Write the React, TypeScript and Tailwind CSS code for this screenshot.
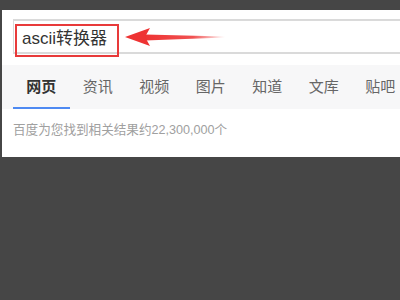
import React from "react";

const tabs = ["网页", "资讯", "视频", "图片", "知道", "文库", "贴吧"];

export default function App() {
  return (
    <div className="w-[400px] h-[300px] bg-[#464646] overflow-hidden flex flex-col font-['Noto_Sans_CJK_SC',sans-serif]">
      <div className="h-[10px] shrink-0" />
      <div className="relative ml-[2px] h-[147px] bg-white flex flex-col">
        {/* Search box */}
        <div className="relative mt-[9px] ml-[11px] h-[35px] border-t-2 border-b-2 border-l border-[#dadada] flex items-center">
          <span className="ml-[8px] mt-[3px] text-[17px] text-[#333] leading-none font-['Liberation_Sans','Noto_Sans_CJK_SC',sans-serif]">
            ascii转换器
          </span>
        </div>
        {/* highlight box */}
        <div className="absolute left-[13px] top-[14px] w-[104px] h-[33px] border-[2.5px] border-[#e83a3a]" />
        {/* arrow */}
        <svg
          className="absolute left-[121px] top-[15px]"
          width="106"
          height="24"
          viewBox="0 0 106 24"
        >
          <defs>
            <linearGradient id="tail" x1="0" x2="1" y1="0" y2="0">
              <stop offset="0" stopColor="#ee3333" />
              <stop offset="0.6" stopColor="#ee3333" stopOpacity="0.85" />
              <stop offset="1" stopColor="#ee3333" stopOpacity="0" />
            </linearGradient>
          </defs>
          <path d="M22 9.5 L102 11.5 L102 12.5 L22 15.5 Z" fill="url(#tail)" />
          <path d="M2 12 L27 3 L22 12 L27 21 Z" fill="#ee3333" />
        </svg>

        {/* Tabs */}
        <div className="mt-[11px] h-[44px] bg-[#f7f7f8] flex items-end pl-[11px]">
          {tabs.map((t, i) => (
            <div
              key={t}
              className="w-[56.5px] shrink-0 h-full flex flex-col items-center justify-end"
            >
              <span
                className={
                  i === 0
                    ? "text-[15px] font-bold text-[#333] leading-none mb-[14px]"
                    : "text-[15px] text-[#666] leading-none mb-[14px]"
                }
              >
                {t}
              </span>
              <div
                className={
                  i === 0 ? "h-[2px] w-full bg-[#4e8af2]" : "h-[2px] w-full"
                }
              />
            </div>
          ))}
        </div>

        {/* result count */}
        <div className="mt-[15px] ml-[11px] text-[12.6px] text-[#a0a0a0] leading-none font-['Liberation_Sans','Noto_Sans_CJK_SC',sans-serif]">
          百度为您找到相关结果约22,300,000个
        </div>
      </div>
    </div>
  );
}
